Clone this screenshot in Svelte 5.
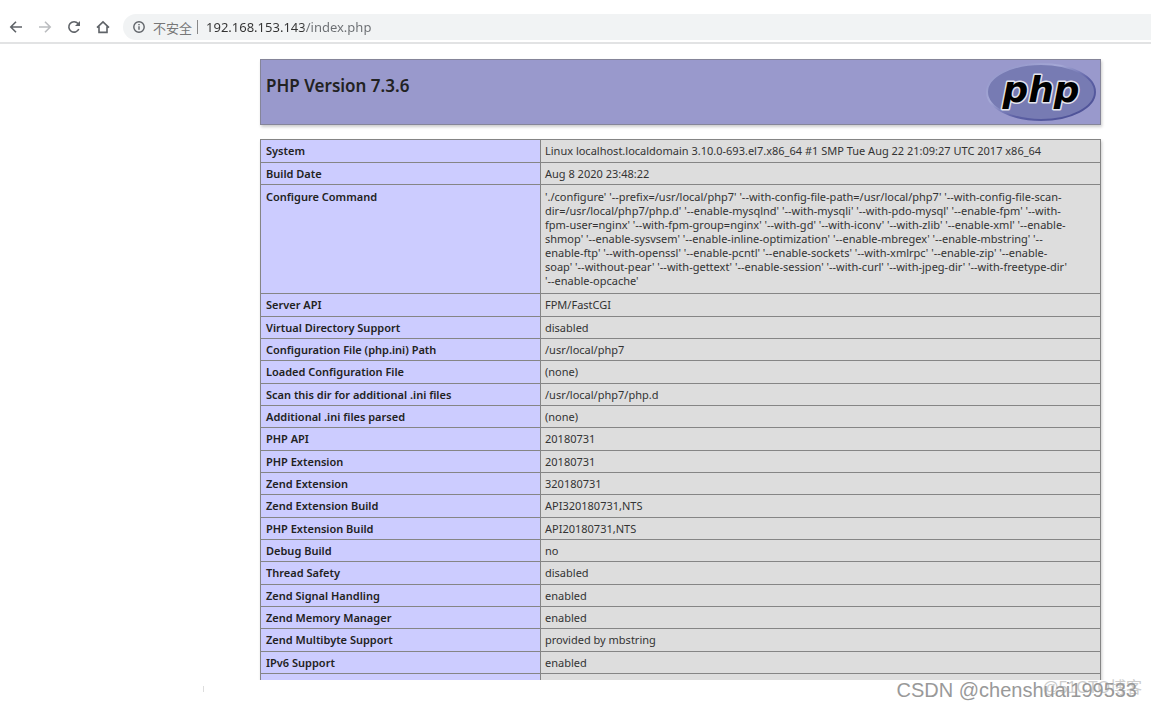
<!-- phpinfo() page under a browser toolbar -->
<script lang="ts">
	type Row = { label: string; value: string; long?: boolean };

	const rows: Row[] = [
		{ label: 'System', value: 'Linux localhost.localdomain 3.10.0-693.el7.x86_64 #1 SMP Tue Aug 22 21:09:27 UTC 2017 x86_64' },
		{ label: 'Build Date', value: 'Aug 8 2020 23:48:22' },
		{
			label: 'Configure Command',
			long: true,
			value: [
				`'./configure' '--prefix=/usr/local/php7' '--with-config-file-path=/usr/local/php7' '--with-config-file-scan-`,
				`dir=/usr/local/php7/php.d' '--enable-mysqlnd' '--with-mysqli' '--with-pdo-mysql' '--enable-fpm' '--with-`,
				`fpm-user=nginx' '--with-fpm-group=nginx' '--with-gd' '--with-iconv' '--with-zlib' '--enable-xml' '--enable-`,
				`shmop' '--enable-sysvsem' '--enable-inline-optimization' '--enable-mbregex' '--enable-mbstring' '--`,
				`enable-ftp' '--with-openssl' '--enable-pcntl' '--enable-sockets' '--with-xmlrpc' '--enable-zip' '--enable-`,
				`soap' '--without-pear' '--with-gettext' '--enable-session' '--with-curl' '--with-jpeg-dir' '--with-freetype-dir'`,
				`'--enable-opcache'`
			].join('\n')
		},
		{ label: 'Server API', value: 'FPM/FastCGI' },
		{ label: 'Virtual Directory Support', value: 'disabled' },
		{ label: 'Configuration File (php.ini) Path', value: '/usr/local/php7' },
		{ label: 'Loaded Configuration File', value: '(none)' },
		{ label: 'Scan this dir for additional .ini files', value: '/usr/local/php7/php.d' },
		{ label: 'Additional .ini files parsed', value: '(none)' },
		{ label: 'PHP API', value: '20180731' },
		{ label: 'PHP Extension', value: '20180731' },
		{ label: 'Zend Extension', value: '320180731' },
		{ label: 'Zend Extension Build', value: 'API320180731,NTS' },
		{ label: 'PHP Extension Build', value: 'API20180731,NTS' },
		{ label: 'Debug Build', value: 'no' },
		{ label: 'Thread Safety', value: 'disabled' },
		{ label: 'Zend Signal Handling', value: 'enabled' },
		{ label: 'Zend Memory Manager', value: 'enabled' },
		{ label: 'Zend Multibyte Support', value: 'provided by mbstring' },
		{ label: 'IPv6 Support', value: 'enabled' },
		{ label: '', value: '' }
	];

	let url = $state('192.168.153.143/index.php');
</script>

<div class="window">
	<header class="toolbar">
		<nav class="nav" aria-label="Browser">
			<button aria-label="Back">
				<svg viewBox="0 0 16 16"><path d="M14 8H3M8 2.8 2.8 8 8 13.2" /></svg>
			</button>
			<button class="off" aria-label="Forward">
				<svg viewBox="0 0 16 16"><path d="M2 8h11M8 2.8 13.2 8 8 13.2" /></svg>
			</button>
			<button aria-label="Reload">
				<svg viewBox="0 0 16 16"><path d="M12.8 10A5.2 5.2 0 1 1 12 4.6L13 6" /><path class="solid" d="M14 2v5H9z" /></svg>
			</button>
			<button aria-label="Home">
				<svg viewBox="0 0 16 16"><path d="M2 8.6 8 2.8l6 5.8M4 7.4v6h8v-6" /></svg>
			</button>
		</nav>
		<div class="omnibox">
			<svg class="info" viewBox="0 0 14 14"><circle cx="7" cy="7" r="5.2" /><path d="M7 6.2v3.6M7 4v1.3" /></svg>
			<label for="url">不安全</label>
			<span class="bar"></span>
			<input id="url" type="text" bind:value={url} spellcheck="false" />
		</div>
	</header>

	<main>
		<div class="banner">
			<h1>PHP Version 7.3.6</h1>
			<svg class="logo" viewBox="0 0 112 62" role="img" aria-label="PHP logo">
				<defs>
					<linearGradient id="rim" x1="0" y1="0" x2="1" y2="1">
						<stop offset="0" stop-color="#8e91c6" />
						<stop offset="0.35" stop-color="#a5a8d6" />
						<stop offset="0.6" stop-color="#5c60a4" />
						<stop offset="1" stop-color="#484c92" />
					</linearGradient>
				</defs>
				<ellipse cx="56" cy="31" rx="54" ry="28" fill="#777bb3" stroke="url(#rim)" stroke-width="2" />
				<text x="56" y="41" text-anchor="middle">php</text>
			</svg>
		</div>

		<table>
			<tbody>
				{#each rows as row}
					<tr class:long={row.long}>
						<th scope="row">{row.label}</th>
						<td>{row.value}</td>
					</tr>
				{/each}
			</tbody>
		</table>
	</main>

	<footer>
		<span class="tick"></span>
		<span class="mark faint">@51CTO博客</span>
		<span class="mark">CSDN @chenshuai199533</span>
	</footer>
</div>

<style>
	:global(body) {
		margin: 0;
		background: #fff;
	}
	.window {
		display: flex;
		flex-direction: column;
		height: 100vh;
		overflow: hidden;
		font-family: 'Noto Sans', 'Noto Sans CJK SC', sans-serif;
		color: #222;
	}

	.toolbar {
		display: flex;
		align-items: center;
		gap: 12px;
		padding: 14px 0 2px 8px;
		border-bottom: 2px solid #e2e3e4;
	}
	.nav {
		display: flex;
		gap: 13px;
	}
	.nav button {
		display: flex;
		padding: 0;
		border: none;
		background: none;
	}
	.nav svg {
		width: 16px;
		height: 16px;
		fill: none;
		stroke: #5f6368;
		stroke-width: 1.6;
	}
	.nav .off svg {
		stroke: #bbbdc0;
	}
	.nav .solid {
		fill: #5f6368;
		stroke: none;
	}
	.omnibox {
		flex: 1;
		display: flex;
		align-items: center;
		height: 26px;
		padding-left: 9px;
		border-radius: 13px 0 0 13px;
		background: #f1f3f4;
		font-size: 13px;
		color: #777;
	}
	.info {
		width: 14px;
		height: 14px;
		margin-right: 7px;
		fill: none;
		stroke: #5f6368;
		stroke-width: 1.4;
	}
	.bar {
		width: 1px;
		height: 14px;
		margin: 0 8px 0 5px;
		background: #888;
	}
	#url {
		flex: 1;
		padding: 0;
		border: none;
		outline: none;
		font: inherit;
		/* host dark, path lighter */
		background: linear-gradient(90deg, #333 98px, #6b6e72 98px);
		background-clip: text;
		-webkit-text-fill-color: transparent;
	}

	main {
		flex: 1;
		min-height: 0;
		overflow: hidden;
		padding: 15px 50px 0 260px;
	}
	.banner {
		display: flex;
		justify-content: space-between;
		align-items: flex-start;
		height: 64px;
		margin-bottom: 14px;
		padding: 0 3px 0 5px;
		border: 1px solid #858599;
		background: #9999cc;
		box-shadow: 1px 2px 3px #ccc;
	}
	h1 {
		margin: 14px 0 0;
		font-size: 17px;
		line-height: 24px;
		font-weight: 600;
	}
	.logo {
		width: 112px;
		height: 62px;
		margin-top: 1px;
		overflow: visible;
	}
	.logo text {
		font: italic 700 36px 'DejaVu Sans', sans-serif;
		fill: #000;
		stroke: #e4e4ec;
		stroke-width: 3px;
		stroke-linejoin: round;
		paint-order: stroke;
	}

	table {
		width: 100%;
		table-layout: fixed;
		border-collapse: collapse;
		background: #ddd;
		box-shadow: 1px 2px 3px #ccc;
		font-size: 11px;
		line-height: 14px;
	}
	th,
	td {
		padding: 4px 4px 3px;
		border: 1px solid #858585;
		text-align: left;
		vertical-align: top;
	}
	th {
		width: 270px;
		padding-left: 5px;
		background: #ccccff;
		font-weight: 600;
	}
	td {
		color: #333;
		white-space: pre;
	}
	tr:nth-child(3n + 1) > * {
		padding-bottom: 4px;
	}
	.long > * {
		padding-top: 5px;
		padding-bottom: 5px;
	}

	footer {
		position: relative;
		height: 26px;
	}
	.tick {
		display: block;
		width: 1px;
		height: 6px;
		margin: 6px 0 0 203px;
		background: #ddd;
	}
	/* watermarks run over the end of the page */
	.mark {
		position: absolute;
		right: 14px;
		bottom: 4px;
		font-family: 'Liberation Sans', 'Noto Sans CJK SC', sans-serif;
		font-size: 20px;
		line-height: 24px;
		color: #999;
		white-space: nowrap;
	}
	.faint {
		right: 9px;
		bottom: 6px;
		font-size: 16px;
		color: #ccc;
	}
</style>
